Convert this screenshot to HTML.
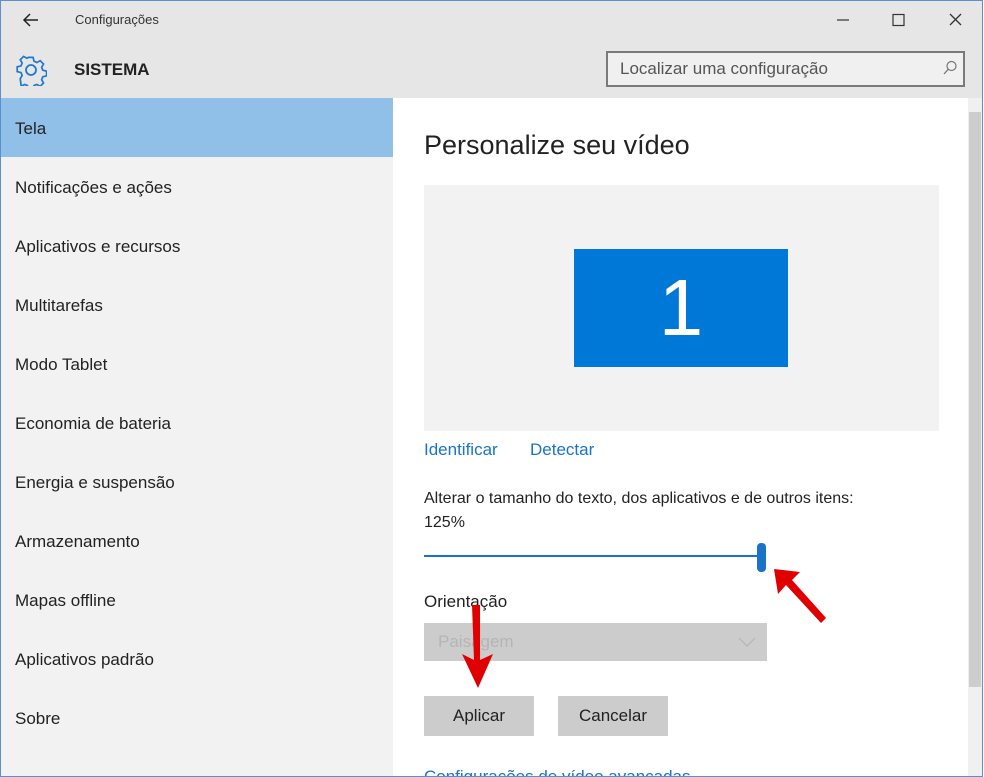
<!DOCTYPE html>
<html><head><meta charset="utf-8"><style>
*{margin:0;padding:0;box-sizing:border-box}
body{width:984px;height:777px;overflow:hidden;background:#fff;font-family:"Liberation Sans",sans-serif;position:relative;color:#222}
.frame{position:absolute;left:0;top:0;width:983px;height:777px;border:1px solid #5a8fd0;overflow:hidden}
.in{position:absolute;left:-1px;top:-1px;width:984px;height:777px}
.top{position:absolute;left:0;top:0;width:984px;height:98px;background:#e6e6e6}
.side{position:absolute;left:0;top:98px;width:393px;height:679px;background:#f2f2f2}
.sel{position:absolute;left:0;top:98px;width:393px;height:59px;background:#90bfe7}
.item{position:absolute;left:15px;font-size:17px;color:#222}
.abs{position:absolute}
.btn{position:absolute;top:696px;height:40px;background:#cccccc;font-size:17px;text-align:center;line-height:40px;color:#222}
</style></head><body>
<div class="frame"><div class="in">
<div class="top"></div>
<div class="side"></div>
<div class="sel"></div>
<svg class="abs" style="left:22px;top:11px" width="18" height="18" viewBox="0 0 18 18"><path d="M16 9H2M8 3L2 9l6 6" stroke="#222" stroke-width="1.5" fill="none"/></svg>
<div class="abs" style="left:75px;top:12px;font-size:13px;color:#333">Configurações</div>
<svg class="abs" style="left:830px;top:12px" width="140" height="16"><path d="M7 8h12" stroke="#333" stroke-width="1.2"/><rect x="63" y="2.5" width="11" height="11" fill="none" stroke="#333" stroke-width="1.2"/><path d="M120 2l11 11M131 2l-11 11" stroke="#333" stroke-width="1.3"/></svg>
<svg class="abs" style="left:15px;top:54px" width="32" height="32" viewBox="0 0 32 32"><g fill="none" stroke="#1e78d0" stroke-width="1.8"><circle cx="16" cy="16" r="5"/><path d="M13.5 3h5l1 4 3 1.5 3.5-2 3.5 3.5-2 3.5 1.2 3 4 1v5l-4 1-1.2 3 2 3.5-3.5 3.5-3.5-2-3 1.2-1 4h-5l-1-4-3-1.2-3.5 2L5 25.5l2-3.5-1.2-3-4-1v-5l4-1L7 9l-2-3.5L8.5 2 12 4z" transform="translate(0.5 0.5) scale(0.95)"/></g></svg>
<div class="abs" style="left:74px;top:60px;font-size:17px;font-weight:bold;color:#222">SISTEMA</div>
<div class="abs" style="left:606px;top:51px;width:359px;height:36px;border:2px solid #7a7a7a;background:#f0f0f0"></div>
<div class="abs" style="left:620px;top:59px;font-size:17px;color:#555">Localizar uma configuração</div>
<svg class="abs" style="left:942px;top:60px" width="16" height="16"><circle cx="9.5" cy="6" r="4.5" fill="none" stroke="#777" stroke-width="1.2"/><path d="M6.3 9.2L2 14" stroke="#777" stroke-width="1.3"/></svg>
<div class="item" style="top:119px">Tela</div>
<div class="item" style="top:178px">Notificações e ações</div>
<div class="item" style="top:237px">Aplicativos e recursos</div>
<div class="item" style="top:296px">Multitarefas</div>
<div class="item" style="top:355px">Modo Tablet</div>
<div class="item" style="top:414px">Economia de bateria</div>
<div class="item" style="top:473px">Energia e suspensão</div>
<div class="item" style="top:532px">Armazenamento</div>
<div class="item" style="top:591px">Mapas offline</div>
<div class="item" style="top:650px">Aplicativos padrão</div>
<div class="item" style="top:709px">Sobre</div>
<div class="abs" style="left:968px;top:98px;width:14px;height:679px;background:#f0f0f0"></div>
<div class="abs" style="left:969px;top:112px;width:12px;height:575px;background:#cdcdcd"></div>
<div class="abs" style="left:424px;top:130px;font-size:27px;color:#222">Personalize seu vídeo</div>
<div class="abs" style="left:424px;top:185px;width:515px;height:246px;background:#f2f2f2"></div>
<div class="abs" style="left:574px;top:249px;width:214px;height:118px;background:#0078d7;color:#fff;font-size:80px;text-align:center;line-height:118px;font-weight:300">1</div>
<div class="abs" style="left:424px;top:440px;font-size:17px;color:#1a73c8">Identificar</div>
<div class="abs" style="left:530px;top:440px;font-size:17px;color:#1a73c8">Detectar</div>
<div class="abs" style="left:424px;top:490px;font-size:16px;color:#222">Alterar o tamanho do texto, dos aplicativos e de outros itens:</div>
<div class="abs" style="left:424px;top:514px;font-size:16px;color:#222">125%</div>
<div class="abs" style="left:424px;top:555px;width:340px;height:2px;background:#1a73c8"></div>
<div class="abs" style="left:757px;top:543px;width:9px;height:29px;border-radius:4px;background:#1a73c8"></div>
<div class="abs" style="left:424px;top:592px;font-size:17px;color:#222">Orientação</div>
<div class="abs" style="left:424px;top:623px;width:343px;height:38px;background:#cccccc"></div>
<div class="abs" style="left:438px;top:632px;font-size:17px;color:#b5b5b5">Paisagem</div>
<svg class="abs" style="left:738px;top:636px" width="18" height="12"><path d="M1 2l8 8 8-8" stroke="#b5b5b5" fill="none" stroke-width="1.2"/></svg>
<div class="btn" style="left:424px;width:110px">Aplicar</div>
<div class="btn" style="left:558px;width:110px">Cancelar</div>
<div class="abs" style="left:424px;top:767px;font-size:17px;color:#1a73c8">Configurações de vídeo avançadas</div>
<svg class="abs" style="left:0;top:0" width="984" height="777"><g fill="#e00000"><path d="M826 618l-5 5-35-38-8 9-4-25 26 3-8 8z"/><path d="M472 605l8 0 0 55 13-6-15 34-16-34 12 6z"/></g></svg>
</div></div>
</body></html>
